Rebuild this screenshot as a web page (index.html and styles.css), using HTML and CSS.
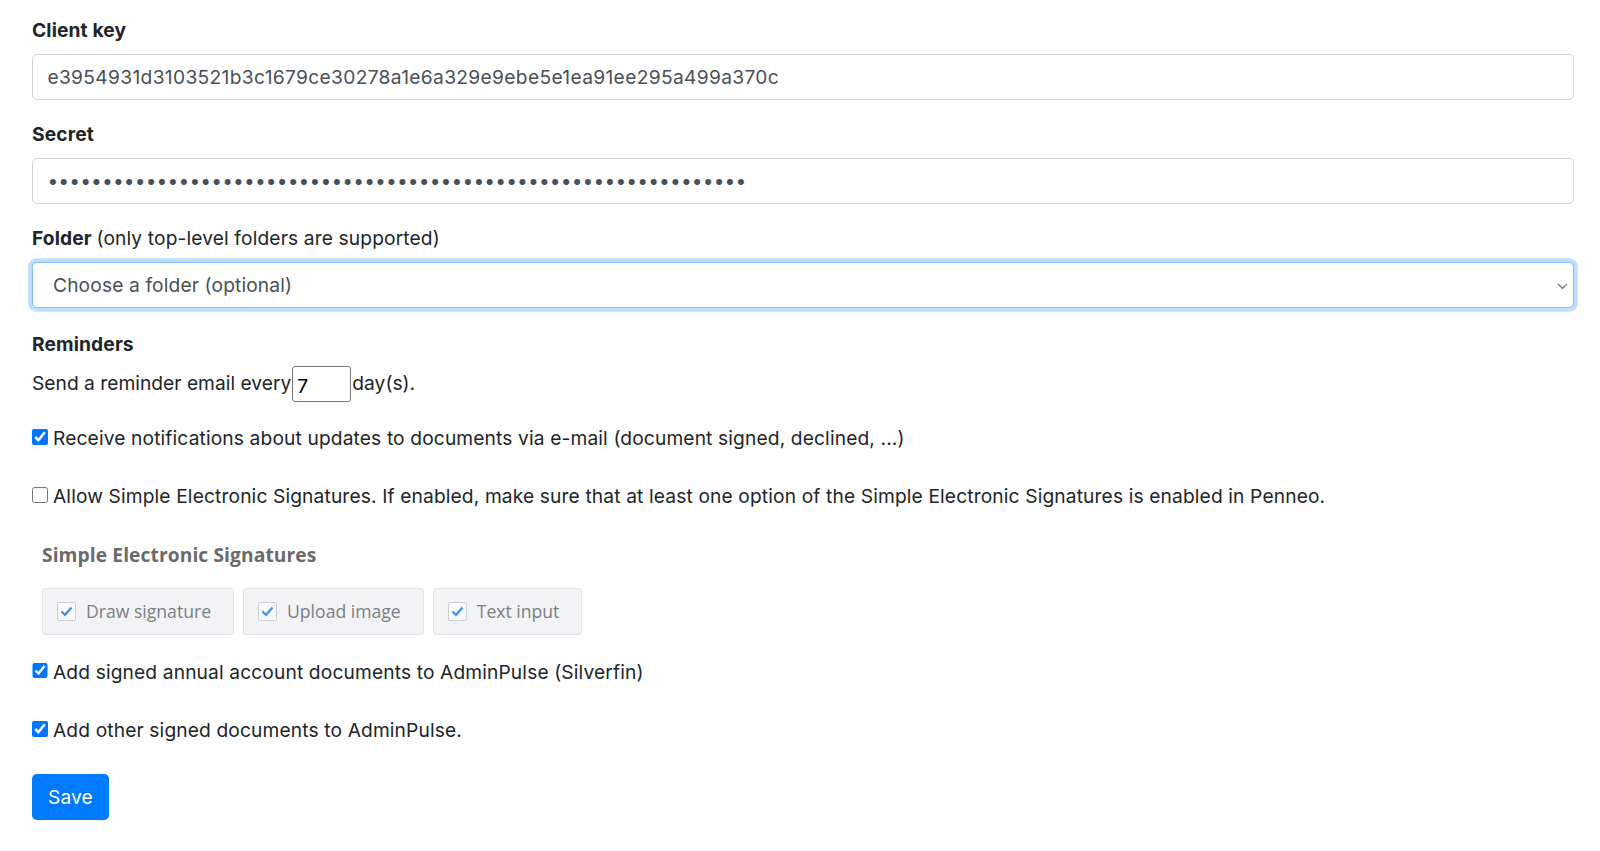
FILE: index.html
```html
<!DOCTYPE html>
<html lang="en">
<head>
<meta charset="utf-8">
<title>Settings</title>
<link rel="stylesheet" href="styles.css">
</head>
<body>
<div class="page">
  <div class="group">
    <label class="lbl">Client key</label>
    <input class="ctl key" type="text" value="e3954931d3103521b3c1679ce30278a1e6a329e9ebe5e1ea91ee295a499a370c">
  </div>
  <div class="group">
    <label class="lbl">Secret</label>
    <input class="ctl secret" type="password" value="aaaaaaaaaaaaaaaaaaaaaaaaaaaaaaaaaaaaaaaaaaaaaaaaaaaaaaaaaaaaaaaa">
  </div>
  <div class="group folder">
    <label class="lbl">Folder <span class="lbl-note">(only top-level folders are supported)</span></label>
    <div class="select">
      <span class="select-text">Choose a folder (optional)</span>
      <svg class="chev" width="11" height="7" viewBox="0 0 11 7"><path d="M1 1 L5.5 5.5 L10 1" fill="none" stroke="#6c757d" stroke-width="1.2"/></svg>
    </div>
  </div>
  <div class="lbl rem-lbl">Reminders</div>
  <div class="rem-row">Send a reminder email every<input class="num" type="text" value="7">day(s).</div>

  <label class="check r1"><input type="checkbox" checked>Receive notifications about updates to documents via e-mail (document signed, declined, ...)</label>
  <label class="check r2"><input type="checkbox">Allow Simple Electronic Signatures. If enabled, make sure that at least one option of the Simple Electronic Signatures is enabled in Penneo.</label>

  <div class="ses">
    <div class="ses-title">Simple Electronic Signatures</div>
    <div class="ses-opts">
      <div class="opt"><span class="tick"><svg width="13" height="11" viewBox="0 0 13 11"><path d="M1.5 5.5 L5 9 L11.5 1.5" fill="none" stroke="#3d8fe6" stroke-width="2.2"/></svg></span>Draw signature</div>
      <div class="opt"><span class="tick"><svg width="13" height="11" viewBox="0 0 13 11"><path d="M1.5 5.5 L5 9 L11.5 1.5" fill="none" stroke="#3d8fe6" stroke-width="2.2"/></svg></span>Upload image</div>
      <div class="opt"><span class="tick"><svg width="13" height="11" viewBox="0 0 13 11"><path d="M1.5 5.5 L5 9 L11.5 1.5" fill="none" stroke="#3d8fe6" stroke-width="2.2"/></svg></span>Text input</div>
    </div>
  </div>

  <label class="check r3"><input type="checkbox" checked>Add signed annual account documents to AdminPulse (Silverfin)</label>
  <label class="check r4"><input type="checkbox" checked>Add other signed documents to AdminPulse.</label>

  <button class="btn" type="button">Save</button>
</div>
</body>
</html>
```

FILE: styles.css
```css
html, body {
  margin: 0;
  padding: 0;
  background: #ffffff;
}
body {
  font-family: Inter, "Liberation Sans", sans-serif;
  font-size: 19.2px;
  line-height: 28.8px;
  letter-spacing: 0.13px;
  color: #212529;
}
.page {
  display: flex;
  flex-direction: column;
  padding: 16px 26px 0 32px;
}
.group {
  display: flex;
  flex-direction: column;
  margin-bottom: 20px;
}
.group.folder {
  margin-bottom: 22px;
}
.lbl {
  font-weight: 700;
  margin-bottom: 9.6px;
  display: block;
}
.lbl-note {
  font-weight: 400;
}
.ctl {
  display: block;
  box-sizing: border-box;
  width: 100%;
  height: 45.6px;
  padding: 7.2px 14.4px;
  font-family: Inter, "Liberation Sans", sans-serif;
  font-size: 19.2px;
  color: #495057;
  background: #fff;
  border: 1px solid #ced4da;
  border-radius: 4.8px;
  outline: none;
}
.ctl.key {
  letter-spacing: 0.33px;
}
.ctl.secret {
  letter-spacing: 0.13px;
}
.select {
  display: flex;
  align-items: center;
  box-sizing: border-box;
  height: 45.6px;
  padding: 0 5px 0 20px;
  color: #495057;
  background: #fff;
  border: 1px solid #80bdff;
  border-radius: 4.8px;
  box-shadow: 0 0 0 3.8px rgba(0, 123, 255, 0.25);
}
.select-text {
  flex: 1;
}
.chev {
  display: block;
  margin-top: 2px;
}
.rem-lbl {
  margin-bottom: 7px;
}
.rem-row {
  display: flex;
  align-items: center;
  height: 36px;
  margin-bottom: 22.6px;
  letter-spacing: 0.02px;
}
.num {
  box-sizing: border-box;
  width: 59px;
  height: 36px;
  margin: 0 1px 0 1px;
  padding: 4px 4px 0 4px;
  font-family: Inter, "Liberation Sans", sans-serif;
  font-size: 19.2px;
  color: #000;
  border: 1px solid #767676;
  border-radius: 3px;
  outline: none;
}
.check {
  display: flex;
  align-items: flex-start;
  height: 28.8px;
  margin-bottom: 28.8px;
}
.check input {
  width: 15.6px;
  height: 15.6px;
  margin: 5px 5.4px 0 0;
  flex: none;
}
.check.r2 {
  margin-bottom: 30px;
}
.check.r3 {
  margin-bottom: 30px;
}
.check.r4 {
  margin-bottom: 28.8px;
}
.ses {
  padding-left: 10px;
  margin-bottom: 23px;
}
.ses-title {
  font-family: "Open Sans", sans-serif;
  font-weight: 700;
  font-size: 19.2px;
  line-height: 28.8px;
  letter-spacing: 0.1px;
  color: #6a6a6a;
  margin-bottom: 18px;
}
.ses-opts {
  display: flex;
  gap: 9px;
}
.opt {
  display: flex;
  align-items: center;
  gap: 10px;
  box-sizing: border-box;
  height: 47px;
  padding: 0 22px 0 14px;
  background: #f1f3f5;
  border: 1px solid #e2e5e9;
  border-radius: 3px;
  font-family: "Open Sans", sans-serif;
  font-size: 17.6px;
  letter-spacing: 0;
  color: #7b8086;
}
.tick {
  display: flex;
  align-items: center;
  justify-content: center;
  box-sizing: border-box;
  width: 19px;
  height: 19px;
  background: #f8f9fa;
  border: 1px solid #c9ced4;
  border-radius: 2px;
}
.tick svg {
  display: block;
}
.btn {
  align-self: flex-start;
  height: 46px;
  padding: 0 16px;
  font-family: Inter, "Liberation Sans", sans-serif;
  font-size: 19.2px;
  letter-spacing: 0.13px;
  color: #fff;
  background: #007bff;
  border: none;
  border-radius: 4.8px;
}
```
